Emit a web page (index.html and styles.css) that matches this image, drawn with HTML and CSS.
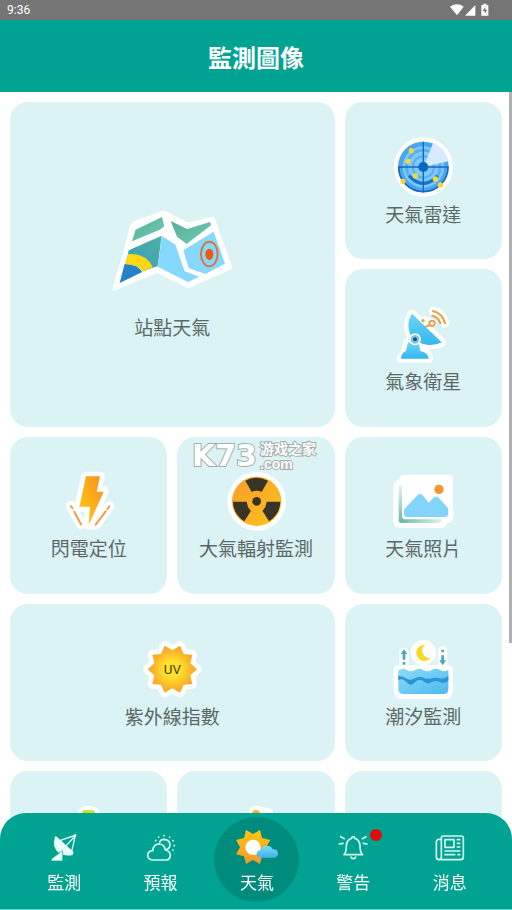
FILE: index.html
```
<!DOCTYPE html>
<html lang="zh-Hant">
<head>
  <meta charset="UTF-8" />
  <meta name="viewport" content="width=device-width, initial-scale=1" />
  <title>監測圖像</title>
  <link rel="stylesheet" href="styles.css">
</head>
<body>
  <div class="status-bar">
    <span>9:36</span>
    <svg class="status-icons" width="40" height="14" viewBox="1349 9 120 42" fill="#fff">
      <path d="M1349 20Q1370 6 1390 20L1370 46Z"/>
      <path d="M1425 15V47H1394Z"/>
      <path d="M1443 15H1449V11H1458V15H1464V47H1443Z"/>
      <path d="M1455 20L1447 33H1453V42L1461 29H1455Z" fill="#757575"/>
    </svg>
  </div>

  <header class="header">
    <h1>監測圖像</h1>
  </header>

  <main class="content">
    <div class="grid">
      <a href="#" class="card card-large">
        <svg class="icon" viewBox="37 -2 360 360">
          <defs>
            <linearGradient id="mapGreen" x1="0" y1="0" x2="1" y2="1">
              <stop offset="0" stop-color="#55ad99"/><stop offset="1" stop-color="#72ccb5"/>
            </linearGradient>
            <linearGradient id="mapTeal" x1="0" y1="1" x2="1" y2="0">
              <stop offset="0" stop-color="#3b9fbb"/><stop offset="1" stop-color="#4eaea5"/>
            </linearGradient>
          </defs>
          <path d="M45 293L77 183L96 108Q98 101 106 97L185 67Q192 64 198 68L265 102L339 84L391 230L265 287L173 240Z" fill="#fff" stroke="#fff" stroke-width="12" stroke-linejoin="round"/>
          <path d="M108 117L187 79L194 107L181 117L97 152Z" fill="url(#mapGreen)"/>
          <path d="M213 91L263 115L331 94L334 104L261 160L232 138Z" fill="url(#mapGreen)"/>
          <path d="M87 179L186 135L174 227L163 230L131 242Q112 220 79 220Z" fill="url(#mapTeal)"/>
          <path d="M75 219Q115 222 128 244L60 277Z" fill="#2383c5"/>
          <path d="M85 190Q139 187 159 229L130 243Q114 219 76 221Z" fill="#fcd810"/>
          <path d="M187 136L227 162L255 242L299 258L265 274L174 228Z" fill="#86d8ff"/>
          <path d="M251 179L342 123L376 219L317 250L267 232Z" fill="#86d8ff"/>
          <ellipse cx="329" cy="190" rx="25" ry="37" fill="none" stroke="#d97540" stroke-width="6"/>
          <ellipse cx="329" cy="191" rx="12" ry="17" fill="#f0590e"/>
        </svg>
        <span class="label">站點天氣</span>
      </a>

      <a href="#" class="card">
        <svg class="icon" viewBox="40 48 180 180">
          <circle cx="131" cy="138" r="89" fill="#fff"/>
          <circle cx="131" cy="138" r="76" fill="#4ba5ec"/>
          <circle cx="131" cy="138" r="62" fill="#7ccbfb"/>
          <circle cx="131" cy="138" r="50" fill="none" stroke="#5aaef0" stroke-width="9"/>
          <circle cx="131" cy="138" r="32" fill="none" stroke="#5aaef0" stroke-width="6"/>
          <path d="M57 138A74 74 0 0 0 205 138" fill="none" stroke="#176bc5" stroke-width="5"/>
          <path d="M88 164Q131 211 174 164" fill="none" stroke="#1974ce" stroke-width="10"/>
          <path d="M131 138L160 67A76 76 0 0 1 206 121Z" fill="#d8eaff"/>
          <path d="M131 62V214M55 138H207" stroke="#1268bd" stroke-width="4"/>
          <circle cx="131" cy="138" r="15" fill="#0868bd"/>
          <g fill="#f5d735">
            <circle cx="95" cy="89" r="8"/><circle cx="85" cy="121" r="8"/>
            <circle cx="107" cy="165" r="8"/><circle cx="70" cy="181" r="8"/>
            <circle cx="167" cy="174" r="8"/><circle cx="182" cy="192" r="8"/>
          </g>
        </svg>
        <span class="label">天氣雷達</span>
      </a>

      <a href="#" class="card">
        <svg class="icon" viewBox="40 40 180 180">
          <defs>
            <linearGradient id="dish" x1="0" y1="0" x2="0" y2="1">
              <stop offset="0" stop-color="#67d9f8"/><stop offset="1" stop-color="#37b5ef"/>
            </linearGradient>
          </defs>
          <g stroke="#fff" stroke-width="26" stroke-linejoin="round" stroke-linecap="round" fill="#fff">
            <path d="M97 70Q78 98 92 132Q116 161 146 163Q168 165 186 155L130 101Z"/>
            <path d="M83 156L78 184L64 203H147Q146 186 121 181L110 160Z"/>
            <path d="M132 90L157 98M160 61Q189 68 196 98"/>
          </g>
          <path d="M97 69Q78 98 92 132Q116 161 146 163Q168 165 186 155Z" fill="url(#dish)"/>
          <path d="M85 155H116L122 181Q144 185 147 204H64Q66 185 79 181Z" fill="url(#dish)"/>
          <circle cx="106" cy="146" r="18" fill="#fff"/>
          <circle cx="106" cy="146" r="13" fill="#79c5e1"/>
          <circle cx="106" cy="146" r="6" fill="#19517b"/>
          <g fill="none" stroke="#e8a14b" stroke-width="6" stroke-linecap="round">
            <path d="M160 61Q189 68 196 98M158 75Q176 79 182 98M139 108L150 103"/>
            <circle cx="157" cy="98" r="8"/>
          </g>
          <circle cx="130" cy="90" r="5" fill="#e8a14b"/>
        </svg>
        <span class="label">氣象衛星</span>
      </a>

      <a href="#" class="card">
        <svg class="icon" viewBox="56 32 180 180">
          <defs>
            <linearGradient id="bolt" x1="1" y1="0" x2="0" y2="1">
              <stop offset="0" stop-color="#f78f20"/><stop offset="1" stop-color="#ffce13"/>
            </linearGradient>
          </defs>
          <g fill="#fff" stroke="#fff" stroke-width="30" stroke-linejoin="round" stroke-linecap="round">
            <path d="M137 49H179L169 92H190L146 194L147 140H117Z"/>
            <path d="M92 137L122 192M207 138L166 193"/>
          </g>
          <path d="M137 48H179L169 94H190L145 194L149 139H117Z" fill="url(#bolt)"/>
          <path d="M92 137L96 144M102 154L122 192M207 138L201 146M196 153L166 193" stroke="#e9a04c" stroke-width="6" stroke-linecap="round"/>
        </svg>
        <span class="label">閃電定位</span>
      </a>

      <a href="#" class="card">
        <svg class="icon" viewBox="138 122 180 180">
          <defs>
            <linearGradient id="atom" x1="0" y1="0" x2="1" y2="1">
              <stop offset="0" stop-color="#f99b2b"/><stop offset="1" stop-color="#fbc51d"/>
            </linearGradient>
          </defs>
          <circle cx="230" cy="213" r="88" fill="#fff"/>
          <circle cx="230" cy="213" r="74" fill="url(#atom)"/>
          <path d="M196 151Q230 133 264 151L245 185Q230 178 215 185ZM159 214H200Q202 232 213 241L193 273Q160 252 159 214ZM301 214H260Q258 232 247 241L267 273Q300 252 301 214Z" fill="#3a3427"/>
          <circle cx="230" cy="213" r="13" fill="#3a3427"/>
        </svg>
        <span class="label">大氣輻射監測</span>
      </a>

      <a href="#" class="card">
        <svg class="icon" viewBox="40 32 180 180">
          <defs>
            <linearGradient id="frame" x1="0" y1="0" x2="1" y2="1">
              <stop offset="0" stop-color="#eaf7f4"/><stop offset=".5" stop-color="#6fb9ab"/><stop offset="1" stop-color="#e5f5f2"/>
            </linearGradient>
          </defs>
          <path d="M76 43H204Q221 43 221 60V167Q221 186 202 189Q198 203 182 203H62Q41 203 41 182V76Q41 62 57 58Q61 43 76 43Z" fill="#fff"/>
          <path d="M57 80Q57 75 67 75V166Q67 177 77 177H188Q184 188 170 188H65Q57 188 57 180Z" fill="url(#frame)"/>
          <path d="M77 143L113 105Q121 97 129 105L147 127L161 112Q169 105 177 112L202 139Q206 144 206 151V159Q206 170 195 170H84Q73 170 73 160V153Q73 147 77 143Z" fill="#83d4fb"/>
          <circle cx="178" cy="87" r="14" fill="#f6952d"/>
        </svg>
        <span class="label">天氣照片</span>
      </a>

      <a href="#" class="card card-wide">
        <svg class="icon" viewBox="67 24 180 180">
          <defs>
            <radialGradient id="uv">
              <stop offset=".35" stop-color="#ffe02a"/><stop offset=".8" stop-color="#fbb228"/><stop offset="1" stop-color="#f6a42d"/>
            </radialGradient>
          </defs>
          <path d="M232 115L212 133L218 159L192 161L181 185L158 172L135 185L124 161L98 159L104 133L84 115L104 97L98 71L124 69L135 44L158 58L181 44L192 69L218 71L212 97Z" fill="#fff" stroke="#fff" stroke-width="28" stroke-linejoin="round"/>
          <path d="M232 115L212 133L218 159L192 161L181 185L158 172L135 185L124 161L98 159L104 133L84 115L104 97L98 71L124 69L135 44L158 58L181 44L192 69L218 71L212 97Z" fill="url(#uv)"/>
          <text class="uv-text" x="158" y="130" text-anchor="middle">UV</text>
        </svg>
        <span class="label">紫外線指數</span>
      </a>

      <a href="#" class="card">
        <svg class="icon" viewBox="40 24 180 180">
          <defs>
            <linearGradient id="sea" x1="0" y1="0" x2="1" y2="1">
              <stop offset="0" stop-color="#8bdcf7"/><stop offset="1" stop-color="#4db9ef"/>
            </linearGradient>
          </defs>
          <g fill="#fff" stroke="#fff" stroke-width="28" stroke-linejoin="round" stroke-linecap="round">
            <path d="M56 116H206V178Q206 191 194 191H68Q56 191 56 178Z"/>
            <path d="M73 64V100M189 60V98"/>
            <circle cx="131" cy="65" r="24"/>
          </g>
          <path d="M56 118Q69 109 81 117T106 117T131 117T156 117T181 117T206 117V174Q206 189 191 189H72Q56 189 56 174Z" fill="url(#sea)"/>
          <path d="M56 134Q69 136 81 143T106 142T131 140T156 142T181 142T206 134V149Q193 160 181 153T156 154T131 151T106 154T81 154T56 147Z" fill="#2b94dc"/>
          <path d="M137 42A24 24 0 1 0 153 80A21 21 0 0 1 137 42Z" fill="#f9d824"/>
          <g fill="#4aa6c2">
            <path d="M73 55L83 69H77V86H69V69H63ZM69 93H77V101H69Z"/>
            <path d="M189 103L179 88H185V73H193V88H199ZM185 56H193V64H185Z"/>
          </g>
        </svg>
        <span class="label">潮汐監測</span>
      </a>

      <a href="#" class="card">
        <svg class="icon" viewBox="0 0 60 60">
          <rect x="18" y="0" width="23" height="40" rx="9" fill="#fff"/>
          <rect x="23" y="4" width="13" height="34" rx="3" fill="#c9e02c"/>
        </svg>
        <span class="label"></span>
      </a>

      <a href="#" class="card">
        <svg class="icon" viewBox="0 0 60 60">
          <path d="M24 3Q27 -2 32 0Q38 2 44 2Q48 4 47 12V30H23Z" fill="#fff"/>
          <circle cx="30" cy="8" r="4" fill="#f5b323"/>
        </svg>
        <span class="label"></span>
      </a>

      <a href="#" class="card"></a>
    </div>

    <div class="scroll-thumb"></div>

    <div class="watermark">
      <span class="watermark-logo">K73</span>
      <span class="watermark-site">
        <span>游戏之家</span>
        <span class="watermark-domain">.com</span>
      </span>
    </div>
  </main>

  <nav class="tabs">
    <a href="#" class="tab">
      <svg width="36" height="36" viewBox="138 207 108 108" fill="#e6fffb">
        <path d="M165 230Q154 263 178 280Q194 289 215 286Q222 283 220 275L172 232Q168 227 165 230Z"/>
        <path d="M187 272Q189 279 188 303H153L155 296Z" stroke="#00a391" stroke-width="2"/>
        <path d="M181 241L226 226L215 275M199 257L224 229" fill="none" stroke="#e6fffb" stroke-width="4"/>
        <circle cx="225" cy="227" r="4"/>
      </svg>
      <span>監測</span>
    </a>
    <a href="#" class="tab">
      <svg width="36" height="36" viewBox="428 207 108 108" fill="none" stroke="#d5f8f3" stroke-width="5" stroke-linecap="round">
        <path d="M455 300Q442 298 442 286Q443 273 457 272Q459 253 475 252Q492 252 495 270Q509 272 510 286Q509 299 498 300Z"/>
        <path d="M478 247Q480 238 491 238Q508 239 509 254Q509 264 500 268"/>
        <path d="M491 227V228M475 231V232M466 241V242M508 231V232M518 242V243M522 256V257M518 270V271"/>
      </svg>
      <span>預報</span>
    </a>
    <a href="#" class="tab tab-active">
      <svg width="44" height="36" viewBox="705 207 132 108">
        <defs>
          <linearGradient id="sun" x1="0" y1="0" x2="0" y2="1">
            <stop offset="0" stop-color="#fdc712"/><stop offset="1" stop-color="#f6982c"/>
          </linearGradient>
          <linearGradient id="cloud" x1="0" y1="0" x2="0" y2="1">
            <stop offset="0" stop-color="#79dcfa"/><stop offset="1" stop-color="#43afea"/>
          </linearGradient>
        </defs>
        <path d="M808 283L786 289L780 312L759 300L738 312L732 289L708 283L720 262L708 240L732 234L738 210L759 222L780 210L786 234L811 240L798 262Z" fill="url(#sun)"/>
        <circle cx="759" cy="262" r="23" fill="#fff"/>
        <path d="M783 293Q770 291 770 281Q771 270 783 270Q788 257 801 257Q814 257 818 268Q834 267 834 281Q833 292 821 293Z" fill="url(#cloud)"/>
      </svg>
      <span>天氣</span>
    </a>
    <a href="#" class="tab">
      <svg width="36" height="36" viewBox="256 207 108 108" fill="none" stroke="#d5f8f3" stroke-width="5" stroke-linecap="round" stroke-linejoin="round">
        <path d="M283 284Q290 277 290 258Q291 238 306 235Q306 230 310 230Q315 230 315 235Q330 238 331 258Q331 277 339 284Z"/>
        <path d="M304 291Q305 296 311 296Q317 296 318 291"/>
        <path d="M273 230L284 236M269 252L280 250M349 230L338 236M352 252L341 250"/>
      </svg>
      <span>警告</span>
      <i class="badge"></i>
    </a>
    <a href="#" class="tab">
      <svg width="36" height="36" viewBox="546 207 108 108" fill="none" stroke="#d5f8f3" stroke-width="5" stroke-linecap="round" stroke-linejoin="round">
        <path d="M574 291V234Q574 228 580 228H634Q640 228 640 234V290Q640 299 631 299H567Q559 299 559 291V246Q559 240 565 238L573 238M574 291Q574 299 567 299"/>
        <rect x="585" y="239" width="27" height="23"/>
        <path d="M622 239H629M622 250H629M622 261H629M585 273H629M585 284H614M624 284H629"/>
      </svg>
      <span>消息</span>
    </a>
  </nav>
</body>
</html>
```
FILE: styles.css
```
* {
  box-sizing: border-box;
}
body {
  margin: 0;
  height: 100vh;
  display: flex;
  flex-direction: column;
  overflow: hidden;
  background-color: #fff;
  font-family: Roboto, "Noto Sans CJK TC", sans-serif;
}
a {
  color: inherit;
  text-decoration: none;
}
.status-bar {
  display: flex;
  flex-shrink: 0;
  align-items: center;
  justify-content: space-between;
  height: 20px;
  padding: 0 22px 0 7px;
  background-color: #757575;
  color: #fff;
  font-size: 12px;
}
.header {
  display: flex;
  flex-shrink: 0;
  align-items: center;
  justify-content: center;
  height: 72px;
  padding-top: 6px;
  background-color: #00a391;
  color: #fff;
}
.header h1 {
  margin: 0;
  font-size: 24px;
  line-height: 32px;
}
.content {
  position: relative;
  flex: 1;
  min-height: 0;
  overflow: hidden;
}
.grid {
  display: grid;
  grid-template-columns: repeat(3, 1fr);
  gap: 10px;
  padding: 10px;
}
.card {
  display: flex;
  flex-direction: column;
  align-items: center;
  justify-content: center;
  aspect-ratio: 1;
  padding-top: 3px;
  border-radius: 18px;
  background-color: #dbf3f4;
}
.card-large {
  grid-column: span 2;
  grid-row: span 2;
}
.card-wide {
  grid-column: span 2;
  aspect-ratio: auto;
}
.icon {
  width: 60px;
  height: 60px;
}
.card-large .icon {
  width: 120px;
  height: 120px;
}
.label {
  height: 24px;
  margin-top: 7px;
  font-size: 19px;
  line-height: 24px;
  color: #5c6968;
}
.uv-text {
  font-family: Roboto, sans-serif;
  font-size: 40px;
  fill: #4a3c1c;
}
.scroll-thumb {
  position: absolute;
  top: 0;
  right: 0;
  width: 3px;
  height: 551px;
  background-color: #b0b0b0;
}
.watermark {
  position: absolute;
  top: 348px;
  left: 50%;
  display: flex;
  align-items: center;
  gap: 3px;
  margin-left: -64px;
  color: #fff;
  white-space: nowrap;
  paint-order: stroke;
  -webkit-text-stroke: 2px #a3adad;
}
.watermark-logo {
  font-family: "DejaVu Sans", sans-serif;
  font-size: 30px;
  line-height: 32px;
  font-weight: bold;
}
.watermark-site {
  display: flex;
  flex-direction: column;
  font-family: "Noto Sans CJK SC", sans-serif;
  font-size: 14px;
  line-height: 16px;
  font-weight: bold;
}
.watermark-domain {
  font-family: "Liberation Sans", sans-serif;
  font-size: 14px;
}
.tabs {
  position: fixed;
  left: 0;
  right: 0;
  bottom: 0;
  display: flex;
  justify-content: space-around;
  padding: 4px 14px 7px 16px;
  border-bottom: 1px solid #5fd8cb;
  border-radius: 26px 26px 0 0;
  background-color: #00a391;
}
.tab {
  position: relative;
  display: flex;
  flex-direction: column;
  align-items: center;
  justify-content: center;
  gap: 7px;
  width: 85px;
  height: 85px;
  padding-top: 4px;
  border-radius: 50%;
  color: #fff;
  font-size: 17px;
  line-height: 22px;
}
.tab-active {
  background-color: #008c7c;
}
.badge {
  position: absolute;
  top: 12px;
  right: 14px;
  width: 12px;
  height: 12px;
  border-radius: 50%;
  background-color: #df0d0d;
}
```
